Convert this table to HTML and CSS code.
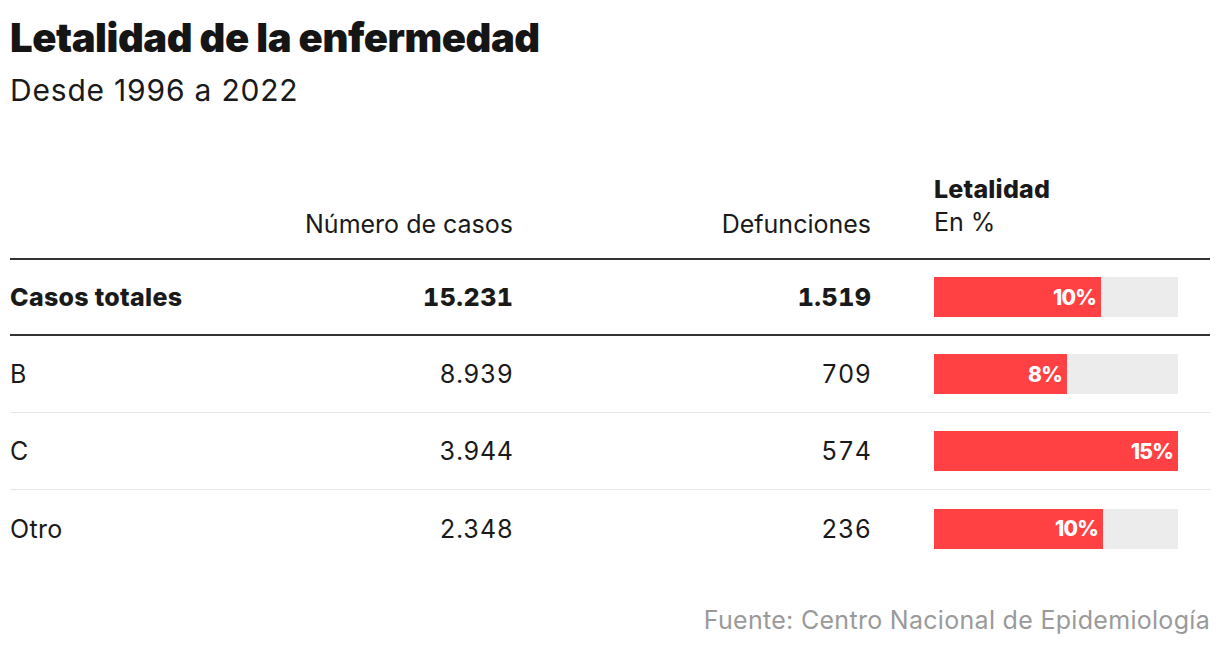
FILE: index.html
```html
<!DOCTYPE html>
<html lang="es">
<head>
<meta charset="utf-8">
<title>Letalidad de la enfermedad</title>
<link rel="stylesheet" href="styles.css">
</head>
<body>
<div class="chart">
  <h1 class="title">Letalidad de la enfermedad</h1>
  <p class="subtitle">Desde 1996 a 2022</p>
  <div class="table">
    <div class="row head">
      <div class="cell label"></div>
      <div class="cell num">Número de casos</div>
      <div class="cell num">Defunciones</div>
      <div class="cell barcell"><div class="hname">Letalidad</div><div class="hunit">En %</div></div>
    </div>
    <div class="row total">
      <div class="cell label">Casos totales</div>
      <div class="cell num val">15.231</div>
      <div class="cell num val">1.519</div>
      <div class="cell barcell"><div class="track"><div class="fill" style="width:68.5%"><span>10%</span></div></div></div>
    </div>
    <div class="row">
      <div class="cell label">B</div>
      <div class="cell num val">8.939</div>
      <div class="cell num val">709</div>
      <div class="cell barcell"><div class="track"><div class="fill" style="width:54.5%"><span>8%</span></div></div></div>
    </div>
    <div class="row">
      <div class="cell label">C</div>
      <div class="cell num val">3.944</div>
      <div class="cell num val">574</div>
      <div class="cell barcell"><div class="track"><div class="fill" style="width:100%"><span>15%</span></div></div></div>
    </div>
    <div class="row last">
      <div class="cell label">Otro</div>
      <div class="cell num val">2.348</div>
      <div class="cell num val">236</div>
      <div class="cell barcell"><div class="track"><div class="fill" style="width:69.3%"><span>10%</span></div></div></div>
    </div>
  </div>
  <p class="source">Fuente: Centro Nacional de Epidemiología</p>
</div>
</body>
</html>
```
FILE: styles.css
```css
* { box-sizing: border-box; }
html, body { margin: 0; padding: 0; background: #fff; }
body {
  font-family: Inter, Roboto, "Liberation Sans", sans-serif;
  color: #1a1a1a;
}
.chart {
  width: 1220px;
  padding: 0 10px;
}
.title {
  margin: 0;
  padding-top: 14px;
  font-size: 40px;
  line-height: 48px;
  font-weight: 900;
  letter-spacing: -0.45px;
  color: #151515;
}
.subtitle {
  margin: 0;
  padding-top: 8px;
  font-size: 30px;
  line-height: 40px;
  font-weight: 400;
  letter-spacing: 0.8px;
  color: #1a1a1a;
}
.table {
  margin-top: 61px;
}
.row {
  display: grid;
  grid-template-columns: 280px 223px 358px 339px;
  align-items: center;
  height: 77px;
  border-bottom: 1px solid #e6e6e6;
  font-size: 25px;
  white-space: nowrap;
}
.row.head {
  height: 89px;
  align-items: end;
  padding-bottom: 19px;
  border-bottom: 2px solid #333;
}
.row.total {
  height: 76px;
  font-weight: 800;
  border-bottom: 2px solid #333;
}
.row.last { border-bottom: none; }
.cell.label { letter-spacing: 0.3px; }
.cell.num { text-align: right; }
.cell.val {
  font-feature-settings: "tnum" 1;
  letter-spacing: 0.5px;
  margin-right: -0.5px;
}
.cell.barcell { padding-left: 63px; }
.hname { font-weight: 800; line-height: 33px; letter-spacing: 0.2px; }
.hunit { line-height: 33px; }
.track {
  width: 244px;
  height: 40px;
  background: #ececec;
}
.fill {
  height: 40px;
  background: #ff4144;
  display: flex;
  align-items: center;
  justify-content: flex-end;
  padding-right: 5px;
}
.fill span {
  color: #fff;
  font-weight: 800;
  font-size: 21px;
  letter-spacing: -0.8px;
}
.source {
  margin: 38px 0 0;
  text-align: right;
  font-size: 25px;
  letter-spacing: 0.3px;
  color: #9a9a9a;
}
```
